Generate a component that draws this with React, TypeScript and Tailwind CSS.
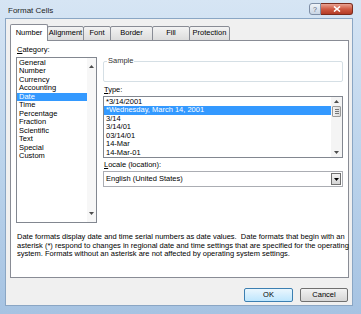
const categories = [
  'General',
  'Number',
  'Currency',
  'Accounting',
  'Date',
  'Time',
  'Percentage',
  'Fraction',
  'Scientific',
  'Text',
  'Special',
  'Custom',
];

const types = [
  '*3/14/2001',
  '*Wednesday, March 14, 2001',
  '3/14',
  '3/14/01',
  '03/14/01',
  '14-Mar',
  '14-Mar-01',
];

const tabs = [
  { label: 'Number', w: 'w-[38px]' },
  { label: 'Alignment', w: 'w-[37px]' },
  { label: 'Font', w: 'w-[28px]' },
  { label: 'Border', w: 'w-[43px]' },
  { label: 'Fill', w: 'w-[38px]' },
  { label: 'Protection', w: 'w-[41px]' },
];

function Arrow({ up }: { up?: boolean }) {
  return (
    <svg width="5" height="3" viewBox="0 0 5 3" className="block">
      <path d={up ? 'M2.5 0 L5 3 L0 3 Z' : 'M0 0 L5 0 L2.5 3 Z'} fill="#4d4d4d" />
    </svg>
  );
}

export default function App() {
  return (
    <div className="w-[361px] h-[314px] overflow-hidden flex flex-col pl-[5px] pr-[8px] pb-[8px] bg-gradient-to-b from-[#d6e5f4] via-[#bcd4ec] to-[#a6c3e2] font-['Liberation_Sans',sans-serif] text-[7.5px] leading-[8.5px] text-black">
      {/* title bar */}
      <div className="h-[18px] flex items-start justify-between">
        <span className="pl-[3px] pt-[6px] text-[8px] leading-[9px] text-[#1e1e1e]">Format Cells</span>
        <div className="flex mt-[3px]">
          <div className="w-[12px] h-[12px] rounded-l-[3px] border border-[#7e8ea6] bg-gradient-to-b from-[#f0f4f9] to-[#c9d5e4] flex items-center justify-center text-[7px] leading-none text-[#5a6474]">
            ?
          </div>
          <div className="w-[32px] h-[12px] rounded-r-[3px] border border-l-0 border-[#7a2b1d] bg-gradient-to-b from-[#e9a293] via-[#cf5a43] to-[#b43c26] flex items-center justify-center">
            <svg width="8" height="6" viewBox="0 0 8 6">
              <path d="M1 0.5 L7 5.5 M7 0.5 L1 5.5" stroke="#ffffff" strokeWidth="1.6" />
            </svg>
          </div>
        </div>
      </div>

      {/* client area */}
      <div className="flex-1 bg-[#f0f0f0] border border-[#8aa6c4] flex flex-col pl-[4px] pr-[3px] pt-[5px]">
        {/* tabs */}
        <div className="flex items-end h-[17px] -mb-px relative z-10">
          {tabs.map((t, i) =>
            i === 0 ? (
              <div
                key={t.label}
                className={`${t.w} h-[17px] bg-white border border-b-0 border-[#898c95] rounded-t-[2px] flex items-center justify-center`}
              >
                {t.label}
              </div>
            ) : (
              <div
                key={t.label}
                className={`${t.w} h-[15px] -ml-px bg-gradient-to-b from-[#f3f3f3] to-[#dcdcdc] border border-[#898c95] rounded-t-[2px] flex items-center justify-center`}
              >
                {t.label}
              </div>
            ),
          )}
        </div>

        {/* tab page */}
        <div className="h-[238px] bg-white border border-[#898c95] flex flex-col pl-[5px] pr-[5px] pt-[5px]">
          <div className="flex gap-[6px]">
            {/* category */}
            <div className="w-[81px] flex flex-col">
              <div className="h-[10px] pl-px">
                <span className="underline">C</span>ategory:
              </div>
              <div className="mt-px h-[166px] border border-[#828790] flex">
                <div className="flex-1 pt-[0.5px]">
                  {categories.map((c) => (
                    <div
                      key={c}
                      className={`h-[8.5px] pl-[2px] ${c === 'Date' ? 'bg-[#3399ff] text-white' : ''}`}
                    >
                      {c}
                    </div>
                  ))}
                </div>
                <div className="w-[9px] bg-[#f7f7f7] flex flex-col items-center justify-between py-[7px]">
                  <Arrow up />
                  <Arrow />
                </div>
              </div>
            </div>

            {/* right side */}
            <div className="w-[240px] flex flex-col">
              <div className="mt-[15px] h-[21px] border border-[#d5dfe5] rounded-[2px] relative">
                <span className="absolute -top-[5px] left-[3px] bg-white px-px text-[#333]">Sample</span>
              </div>
              <div className="mt-[4px] h-[10px] pl-px">
                <span className="underline">T</span>ype:
              </div>
              <div className="h-[62px] border border-[#828790] flex">
                <div className="flex-1 pt-[0.5px]">
                  {types.map((t, i) => (
                    <div
                      key={t}
                      className={`h-[8.5px] pl-[2px] whitespace-nowrap ${i === 1 ? 'bg-[#3399ff] text-white' : ''}`}
                    >
                      {t}
                    </div>
                  ))}
                </div>
                <div className="w-[11px] bg-[#f4f4f4] flex flex-col items-center pt-[3px] pb-[3px]">
                  <Arrow up />
                  <div className="mt-[3px] w-[9px] h-[11px] rounded-[1px] border border-[#9a9a9a] bg-gradient-to-r from-[#f4f4f4] to-[#dadada] flex flex-col items-center justify-center gap-px">
                    <div className="w-[4px] h-px bg-[#777]" />
                    <div className="w-[4px] h-px bg-[#777]" />
                    <div className="w-[4px] h-px bg-[#777]" />
                  </div>
                  <div className="flex-1" />
                  <Arrow />
                </div>
              </div>
              <div className="mt-[3px] h-[10px] pl-px">
                <span className="underline">L</span>ocale (location):
              </div>
              <div className="h-[16px] border border-[#abadb3] flex items-center pl-[2px] pr-[1px]">
                <span className="flex-1">English (United States)</span>
                <div className="w-[10px] h-[12px] border border-[#707070] bg-gradient-to-b from-[#f2f2f2] to-[#d4d4d4] flex items-center justify-center">
                  <svg width="5" height="3" viewBox="0 0 5 3">
                    <path d="M0 0 L5 0 L2.5 3 Z" fill="#000" />
                  </svg>
                </div>
              </div>
            </div>
          </div>

          <div className="mt-[10px] pl-px whitespace-nowrap leading-[8.7px]">
            <div>Date formats display date and time serial numbers as date values.&nbsp; Date formats that begin with an</div>
            <div>asterisk (*) respond to changes in regional date and time settings that are specified for the operating</div>
            <div>system. Formats without an asterisk are not affected by operating system settings.</div>
          </div>
        </div>

        {/* buttons */}
        <div className="flex justify-end gap-[7px] mt-[10px] pr-[1px]">
          <div className="w-[49px] h-[14px] rounded-[2px] border border-[#3c7fb1] bg-gradient-to-b from-[#eaf6fd] to-[#bee6fd] flex items-center justify-center">
            OK
          </div>
          <div className="w-[48px] h-[14px] rounded-[2px] border border-[#707070] bg-gradient-to-b from-[#f2f2f2] to-[#d6d6d6] flex items-center justify-center">
            Cancel
          </div>
        </div>
      </div>
    </div>
  );
}
